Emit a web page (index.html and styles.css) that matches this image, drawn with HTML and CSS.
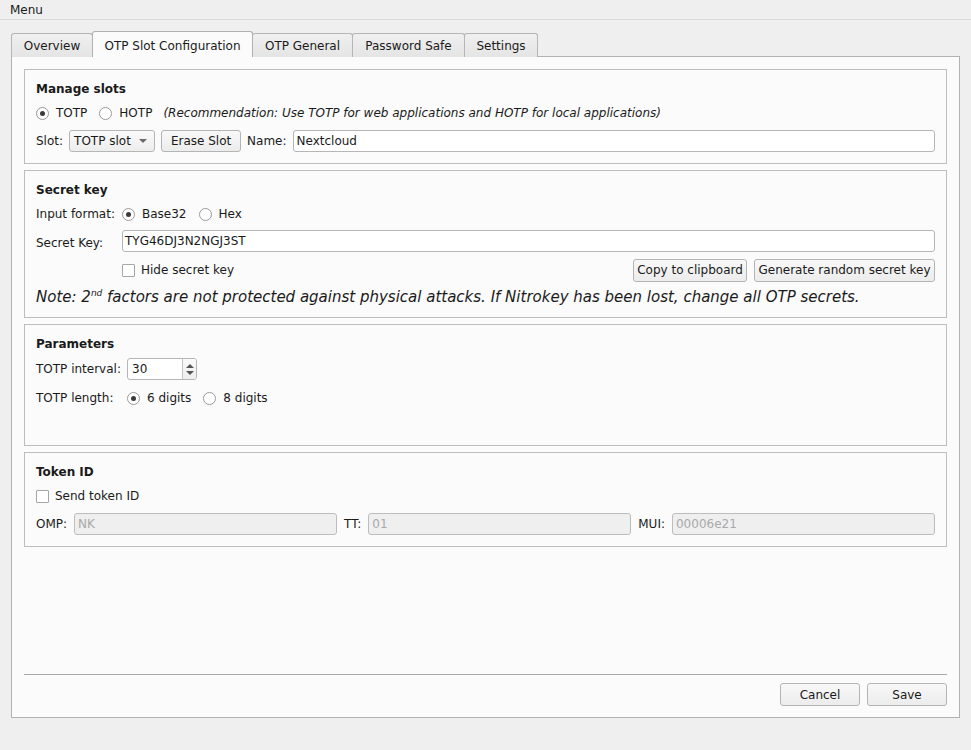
FILE: index.html
```html
<!DOCTYPE html>
<html>
<head>
<meta charset="utf-8">
<link rel="stylesheet" href="styles.css">
</head>
<body>
<div class="menubar"><span class="menu-item">Menu</span></div>
<div class="tabs">
  <div class="tab t1">Overview</div>
  <div class="tab t2 active">OTP Slot Configuration</div>
  <div class="tab t3">OTP General</div>
  <div class="tab t4">Password Safe</div>
  <div class="tab t5">Settings</div>
</div>
<div class="pane">
  <div class="group g-manage">
    <div class="gtitle">Manage slots</div>
    <div class="row r20">
      <span class="radio checked"></span><span class="rlabel">TOTP</span>
      <span class="radio"></span><span class="rlabel">HOTP</span>
      <span class="hint">(Recommendation: Use TOTP for web applications and HOTP for local applications)</span>
    </div>
    <div class="row r22 gap6">
      <span class="lbl">Slot:</span>
      <div class="combo"><span>TOTP slot</span><span class="arrow"></span></div>
      <div class="btn erase">Erase Slot</div>
      <span class="lbl">Name:</span>
      <div class="input grow">Nextcloud</div>
    </div>
  </div>

  <div class="group g-secret">
    <div class="gtitle">Secret key</div>
    <div class="row r20">
      <span class="flabel w86">Input format:</span>
      <span class="radio checked"></span><span class="rlabel">Base32</span>
      <span class="radio"></span><span class="rlabel">Hex</span>
    </div>
    <div class="row r22 keyrow">
      <span class="flabel w86 low">Secret Key:</span>
      <div class="input grow tight">TYG46DJ3N2NGJ3ST</div>
    </div>
    <div class="row r22">
      <span class="w86"></span>
      <span class="check"></span><span class="clabel">Hide secret key</span>
      <span class="grow"></span>
      <div class="btn copy">Copy to clipboard</div>
      <div class="btn gen">Generate random secret key</div>
    </div>
    <div class="note">Note: 2<sup>nd</sup> factors are not protected against physical attacks. If Nitrokey has been lost, change all OTP secrets.</div>
  </div>

  <div class="group g-params">
    <div class="gtitle">Parameters</div>
    <div class="row r22">
      <span class="flabel w91">TOTP interval:</span>
      <div class="spin"><span class="spintext">30</span><span class="spinbtns"><span class="up"></span><span class="down"></span></span></div>
    </div>
    <div class="row r20 lenrow">
      <span class="flabel w91">TOTP length:</span>
      <span class="radio checked"></span><span class="rlabel">6 digits</span>
      <span class="radio"></span><span class="rlabel">8 digits</span>
    </div>
  </div>

  <div class="group g-token">
    <div class="gtitle">Token ID</div>
    <div class="row r20">
      <span class="check"></span><span class="clabel">Send token ID</span>
    </div>
    <div class="row r22 gap7 tokrow">
      <span class="lbl">OMP:</span>
      <div class="input disabled grow">NK</div>
      <span class="lbl">TT:</span>
      <div class="input disabled grow">01</div>
      <span class="lbl">MUI:</span>
      <div class="input disabled grow">00006e21</div>
    </div>
  </div>

  <div class="spacer"></div>
  <div class="sep"></div>
  <div class="footer">
    <div class="btn fbtn">Cancel</div>
    <div class="btn fbtn">Save</div>
  </div>
</div>
</body>
</html>
```

FILE: styles.css
```css
* { box-sizing: border-box; }
html, body {
  margin: 0;
  padding: 0;
  background: #efefef;
  font-family: "DejaVu Sans", sans-serif;
  font-size: 12px;
  color: #1a1a1a;
  width: 971px;
  height: 750px;
  overflow: hidden;
}
.menubar {
  height: 20px;
  border-bottom: 1px solid #dadada;
  display: flex;
  align-items: center;
  padding-left: 10px;
}
.menu-item { line-height: 18px; }

.tabs {
  display: flex;
  align-items: flex-end;
  margin: 11px 0 0 11px;
  height: 26px;
  position: relative;
  z-index: 2;
  margin-bottom: -1px;
}
.tab {
  height: 24px;
  border: 1px solid #b5b5b5;
  border-bottom: none;
  border-radius: 3px 3px 0 0;
  background: linear-gradient(#f0f0f0, #e4e4e4);
  display: flex;
  align-items: center;
  justify-content: center;
  margin-right: -1px;
  padding-top: 1px;
}
.tab.active {
  height: 26px;
  background: #fbfbfb;
  border-color: #b0b0b0;
  padding-top: 2px;
  position: relative;
  z-index: 3;
}
.t1 { width: 82px; }
.t2 { width: 161px; }
.t3 { width: 101px; }
.t4 { width: 113px; }
.t5 { width: 74px; }

.pane {
  margin-left: 11px;
  width: 949px;
  height: 662px;
  border: 1px solid #b2b2b2;
  background: #fbfbfb;
  padding: 12px 12px 11px 12px;
  display: flex;
  flex-direction: column;
  position: relative;
  z-index: 1;
}

.group {
  border: 1px solid #bdbdbd;
  padding: 11px 11px 11px 11px;
  display: flex;
  flex-direction: column;
  margin-bottom: 6px;
}
.gtitle {
  font-weight: bold;
  height: 16px;
  line-height: 16px;
  margin-bottom: 6px;
}
.row {
  display: flex;
  align-items: center;
}
.row + .row { margin-top: 7px; }
.r20 { height: 20px; }
.r22 { height: 22px; }
.gap6 { gap: 6px; }
.gap7 { gap: 7px; }
.grow { flex: 1; }
.w86 { width: 86px; flex: none; }
.w91 { width: 91px; flex: none; }
.low { padding-top: 4px; }
.row.keyrow { margin-top: 6px; }
.row.lenrow { margin-top: 8px; }
.row.tokrow { margin-top: 7px; }

.radio {
  width: 13px;
  height: 13px;
  border-radius: 50%;
  border: 1px solid #9a9a9a;
  background: #ffffff;
  flex: none;
  display: inline-flex;
  align-items: center;
  justify-content: center;
}
.radio.checked::after {
  content: "";
  width: 5px;
  height: 5px;
  border-radius: 50%;
  background: #3a3a3a;
}
.rlabel { margin-left: 7px; margin-right: 12px; }
.hint { font-style: italic; margin-left: -1px; }

.check {
  width: 13px;
  height: 13px;
  border: 1px solid #a6a6a6;
  border-radius: 1px;
  background: #ffffff;
  flex: none;
}
.clabel { margin-left: 6px; }

.combo {
  width: 86px;
  height: 22px;
  border: 1px solid #b6b6b6;
  border-radius: 3px;
  background: linear-gradient(#fafafa, #ededed);
  display: flex;
  align-items: center;
  justify-content: space-between;
  padding: 0 7px 0 4px;
  flex: none;
}
.arrow {
  width: 0;
  height: 0;
  border-left: 4px solid transparent;
  border-right: 4px solid transparent;
  border-top: 4px solid #6a6a6a;
}

.btn {
  height: 23px;
  border: 1px solid #b4b4b4;
  border-radius: 3px;
  background: linear-gradient(#f8f8f8, #ececec);
  display: flex;
  align-items: center;
  justify-content: center;
  flex: none;
}
.erase { width: 80px; height: 22px; }
.copy { width: 114px; margin-right: 7px; }
.gen { width: 181px; }

.input {
  height: 22px;
  border: 1px solid #b6b6b6;
  border-radius: 3px;
  background: #ffffff;
  display: flex;
  align-items: center;
  padding-left: 3px;
  min-width: 0;
}
.input.tight { padding-left: 2px; }
.input.disabled {
  background: #efefef;
  color: #a9a9a9;
  border-color: #bdbdbd;
}

.note {
  font-style: italic;
  font-size: 15px;
  height: 18px;
  line-height: 18px;
  margin-top: 7px;
  white-space: nowrap;
}
.note sup {
  font-size: 9px;
  vertical-align: 6px;
  line-height: 0;
}

.g-params { padding-bottom: 37px; }
.g-token { padding-bottom: 11px; }

.spin {
  width: 70px;
  height: 22px;
  border: 1px solid #b6b6b6;
  border-radius: 3px;
  background: #ffffff;
  display: flex;
  align-items: stretch;
}
.spintext {
  flex: 1;
  display: flex;
  align-items: center;
  padding-left: 4px;
}
.spinbtns {
  width: 14px;
  border-left: 1px solid #c4c4c4;
  background: linear-gradient(#fafafa, #eeeeee);
  display: flex;
  flex-direction: column;
  align-items: center;
  justify-content: center;
  gap: 3px;
  border-radius: 0 2px 2px 0;
}
.up {
  width: 0; height: 0;
  border-left: 4px solid transparent;
  border-right: 4px solid transparent;
  border-bottom: 4px solid #555;
}
.down {
  width: 0; height: 0;
  border-left: 4px solid transparent;
  border-right: 4px solid transparent;
  border-top: 4px solid #555;
}

.spacer { flex: 1; }
.sep {
  height: 1px;
  background: #a8a8a8;
  flex: none;
}
.footer {
  display: flex;
  justify-content: flex-end;
  gap: 7px;
  margin-top: 8px;
}
.fbtn { width: 80px; }
```
